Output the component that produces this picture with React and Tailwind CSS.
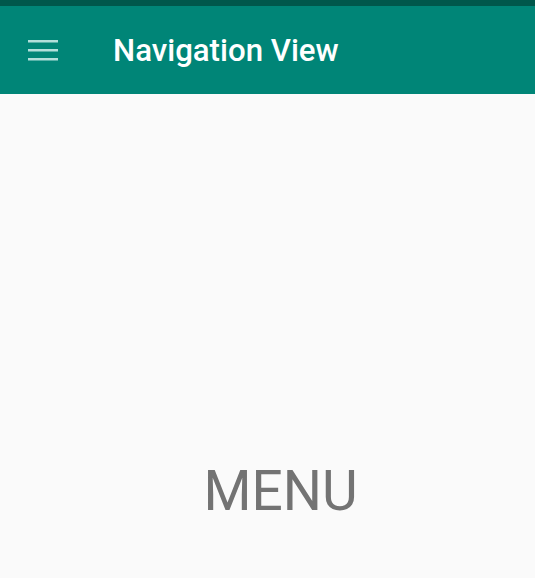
export default function App() {
  return (
    <div className="w-[535px] h-[578px] bg-[#fafafa] flex flex-col overflow-hidden" style={{ fontFamily: "Roboto, 'Noto Sans', sans-serif" }}>
      <div className="h-[6px] bg-[#00574b]" />
      <div className="h-[88px] bg-[#008577] flex items-center">
        <div className="w-[113px] pl-[28px] flex items-center">
          <svg width="30" height="22" viewBox="0 0 30 22">
            <rect x="0" y="1" width="30" height="2.5" fill="#b2dfdb" />
            <rect x="0" y="10" width="30" height="2.5" fill="#b2dfdb" />
            <rect x="0" y="19" width="30" height="2.5" fill="#b2dfdb" />
          </svg>
        </div>
        <div className="text-white text-[31.2px] font-medium leading-none pt-[2px]">Navigation View</div>
      </div>
      <div className="flex-1 flex flex-col">
        <div className="h-[370px]" />
        <div className="pl-[26px] flex justify-center text-[#737373] text-[55px] leading-none">MENU</div>
      </div>
    </div>
  );
}
